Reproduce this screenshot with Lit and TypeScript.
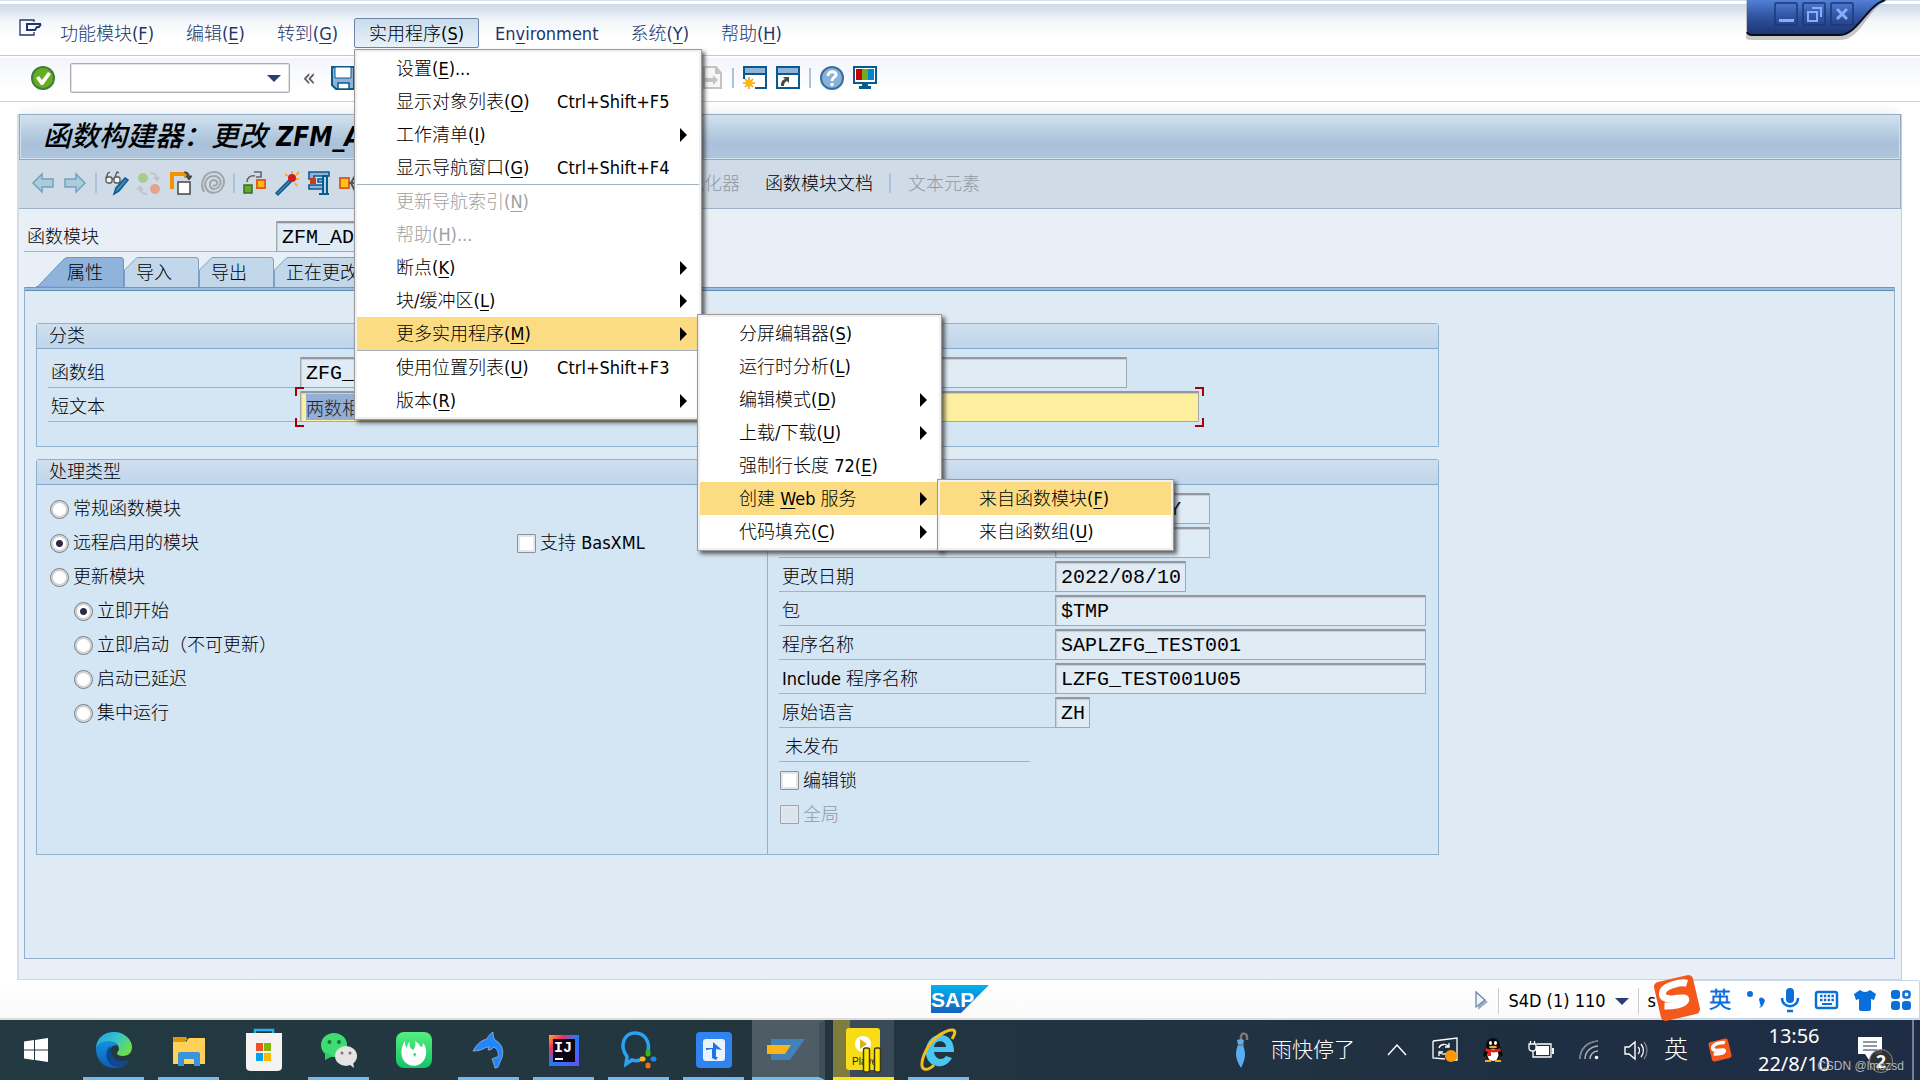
import { LitElement, html, svg, css, nothing, TemplateResult } from "lit";
import { customElement, property } from "lit/decorators.js";

/** Icon drawings, keyed by name: [width, height, shapes]. */
const icons: Record<string, [number, number, unknown]> = {
  session: [24, 18, svg`<g fill="none" stroke="#22366b"><path d="M15 3V1H1v15h14v-3" stroke-width="1.3"/><path d="M22 5H8v6h8l2-3h2l2-3M8 5v6" stroke-width="2"/></g>`],
  ok: [24, 24, svg`<circle cx="12" cy="12" r="11" fill="#68ac20" stroke="#3d7d3f" stroke-width="2"/><path d="M5 12l3-2 3 4 6-8 3 2-8 11h-2z" fill="#fff"/>`],
  save: [24, 24, svg`<path d="M1 1h22v22H5l-4-4z" fill="#8fb4d8" stroke="#0b5a8e" stroke-width="2"/><path d="M4 1h16v11H4z" fill="#fff" stroke="#0b5a8e"/><path d="M7 17h11v6H7z" fill="#fff" stroke="#0b5a8e" stroke-width="1.5"/>`],
  page: [24, 24, svg`<path d="M5 1h12l5 6v15H5z" fill="#f6f6f6" stroke="#c3c3c3" stroke-width="2"/><path d="M16 1v7h6M6 12h8v-3l5 5-5 5v-3H6z" fill="#c3c3c3"/>`],
  newwin: [24, 24, svg`<path d="M1 1h22v21H1z" fill="#fff"/><path d="M1 1h22v7H1z" fill="#8fb4d8"/><path d="M1 13V1h22v21H12M1 8h22" fill="none" stroke="#0b5a8e" stroke-width="2"/><path d="M6 11v12M0 17h12M2 13l8 8M10 13l-8 8" stroke="#f39c12" stroke-width="1.6"/><circle cx="6" cy="17" r="3.5" fill="#fdb913"/>`],
  shortcut: [24, 24, svg`<path d="M1 1h22v21H1z" fill="#fff"/><path d="M1 1h22v7H1z" fill="#8fb4d8"/><path d="M1 1h22v21H1zM1 8h22" fill="none" stroke="#0b5a8e" stroke-width="2"/><path d="M5 20c0-4 1-6 4-7l-2-2h6v6l-2-2c-2 1-3 2-3 5z" fill="#4a4a4a"/>`],
  help: [24, 24, svg`<circle cx="12" cy="12" r="11" fill="#8ab0d6" stroke="#3470a3" stroke-width="2"/><path d="M8 10c0-6 9-5 8-1-1 3-4 2-4 6" fill="none" stroke="#fff" stroke-width="3"/><path d="M10.500 17h3v3h-3z" fill="#fff"/>`],
  monitor: [24, 24, svg`<path d="M1 1h22v16H1z" fill="#fff" stroke="#0b5a8e" stroke-width="2"/><path d="M3 3h6v11H3z" fill="#c80000"/><path d="M9 3h6v11H9z" fill="#70ad1c"/><path d="M15 3h6v11h-6z" fill="#0088cf"/><path d="M9 18h6v2h3v3H6v-3h3z" fill="#0b5a8e"/>`],
  back: [24, 24, svg`<path d="M2 12l9-9v5h11v8H11v5z" fill="#aecbdc" stroke="#6ea2c1" stroke-width="1.5"/>`],
  forward: [24, 24, svg`<path d="M22 12l-9-9v5H2v8h11v5z" fill="#aecbdc" stroke="#6ea2c1" stroke-width="1.5"/>`],
  toggle: [24, 24, svg`<path d="M9 23l2-6 9-10 3 2-9 11z" fill="#3f85b8" stroke="#0b5a8e" stroke-width="1.5"/><g fill="#eef3f7" stroke="#555" stroke-width="1.300"><rect x="1" y="6" width="6" height="6" rx="2"/><rect x="9" y="6" width="6" height="6" rx="2"/><path d="M1 7l2-5 2-1M10 6l2-5 2 1M7 8h2" fill="none"/></g>`],
  activate: [24, 24, svg`<circle cx="6" cy="7" r="5" fill="#a9cb90"/><circle cx="18" cy="18" r="5" fill="#e3a38c"/><path d="M13 2c5 0 7 2 7 6m-3-2l3 3 2-3M10 23c-5 0-7-2-7-6m-3 2l3-3 3 3" fill="none" stroke="#bfc4c8" stroke-width="2"/>`],
  copy: [24, 24, svg`<path d="M3 18V3h14v4" fill="none" stroke="#f39200" stroke-width="4"/><path d="M9 11h12v12H9z" fill="#fff" stroke="#444" stroke-width="1.5"/><path d="M15 1c4 0 5 1 5 5m-3-1l3 4 3-4z" fill="#444" stroke="#444"/>`],
  spiral: [24, 24, svg`<g fill="none" stroke="#a0a5a9" stroke-width="2"><path d="M3 21C-2 11 4 1 13 1c8 0 12 8 9 14-3 8-14 9-17 2-3-6 2-12 8-12 5 0 8 5 6 9-2 5-9 5-10 1-1-4 2-6 4-6s4 2 3 4c-1 2-3 2-4 1"/></g>`],
  whereused: [24, 24, svg`<path d="M1 14h8v8H1z" fill="#6aa82a" stroke="#35702a" stroke-width="1.500"/><path d="M14 9h8v8h-8z" fill="#fdb913" stroke="#e2601c" stroke-width="2"/><path d="M4 11c0-4 3-7 8-6M11 1h7v5h-5" fill="none" stroke="#666" stroke-width="1.600"/>`],
  wand: [24, 24, svg`<path d="M1 22L14 9l2 2L3 24z" fill="#3f85b8" stroke="#0b5a8e" stroke-width="1.5"/><path d="M17 0v4M10 3l3 2M24 1l-3 3M24 8h-4M20 12l2 3" stroke="#f8ad1a" stroke-width="2"/><circle cx="17" cy="7" r="4" fill="#d71919"/>`],
  clamp: [24, 24, svg`<path d="M2 1h20v4H7v3H2zM11 8h5v3h-5zM2 14h14v4H2z" fill="#8fb4d8" stroke="#0b5a8e" stroke-width="1.600"/><path d="M16 5h4v18h-4zM12 23h10" fill="#b5cfe6" stroke="#0b5a8e" stroke-width="2"/><path d="M3 7h6v6H3z" fill="#cc3a1c"/>`],
  hierarchy: [24, 24, svg`<path d="M1 7h9v10H1z" fill="#fdc413" stroke="#e2601c" stroke-width="2"/><path d="M10 12h12M12 12l5-9h5M12 12l5 10h5" fill="none" stroke="#555" stroke-width="2"/>`],
  start: [24, 24, svg`<path d="M0 3.500L10 2v9.500H0zM11 2l13-2v11.500H11zM0 12.500h10V22L0 20.500zM11 12.500h13V24l-13-2z" fill="#fff"/>`],
  edge: [36, 36, svg`<defs><linearGradient id="e1" x1="0" y1="0" x2="1" y2=".6"><stop offset="0" stop-color="#1b9de2"/><stop offset=".5" stop-color="#35c1d0"/><stop offset="1" stop-color="#6be04a"/></linearGradient><linearGradient id="e2" x1="0" y1="0" x2="0" y2="1"><stop offset="0" stop-color="#1690dd"/><stop offset="1" stop-color="#0b5db8"/></linearGradient></defs><path d="M0 17C0 6 8 0 18 0c11 0 18 8 18 15 0 6-4 9-9 9-4 0-6-1-6-3 0-1 2-2 2-4 0-4-4-7-9-7-7 0-12 3-14 7z" fill="url(#e1)"/><path d="M0 17c1-5 6-8 12-8 5 0 9 2 10 4-7 0-10 5-9 10 1 8 8 11 15 11-2 1-6 2-10 2C7 36 0 27 0 17z" fill="url(#e2)"/><path d="M14 14c-7 7-4 21 9 21 5 0 9-4 11-8-9 5-20 2-20-13z" fill="#10488f"/>`],
  explorer: [32, 28, svg`<path d="M0 1h13l2 3h-2v4H0z" fill="#d99a07"/><path d="M0 6h13l3-4h16v26H0z" fill="#ffd158"/><path d="M5 28V18q0-2 2-2h18q2 0 2 2v12h-6v-7H11v7H5z" fill="#3b93d9"/>`],
  store: [36, 44, svg`<path d="M9 9V2h18v7" fill="none" stroke="#29b1ef" stroke-width="2.500"/><path d="M0 5h36v34q0 4-5 4H5q-5 0-5-4z" fill="#f4f3f2"/><path d="M10 15h7v8h-7z" fill="#f25022"/><path d="M18 15h7v8h-7z" fill="#7fba00"/><path d="M10 25h7v8h-7z" fill="#00a4ef"/><path d="M18 25h7v8h-7z" fill="#ffb900"/>`],
  wechat: [36, 36, svg`<ellipse cx="13" cy="13" rx="13" ry="12" fill="#3fdc72"/><path d="M4 20v8l8-4z" fill="#2ccf66"/><circle cx="8.500" cy="10" r="2" fill="#157a37"/><circle cx="18" cy="10" r="2" fill="#157a37"/><ellipse cx="25" cy="24" rx="11" ry="10" fill="#e4e4e4"/><path d="M28 32l5 4-1-6z" fill="#e4e4e4"/><circle cx="21" cy="21" r="1.500" fill="#777"/><circle cx="29" cy="21" r="1.500" fill="#777"/>`],
  greencat: [36, 36, svg`<defs><linearGradient id="gc" x1="0" y1="0" x2="0" y2="1"><stop offset="0" stop-color="#55ee80"/><stop offset="1" stop-color="#12c566"/></linearGradient></defs><rect width="36" height="36" rx="8" fill="url(#gc)"/><path d="M9 9c-4 6-5 14-1 20 5 7 16 6 20-1 4-6 2-14-1-17 0 3-1 4-2 4-2-3-4-5-6-6 1 4 0 7-2 9-3-2-4-4-3-8-2 1-3 3-3 6-2-2-2-4-2-7z" fill="#fff"/><path d="M17 22l3-1-1 4z" fill="#12c566"/>`],
  dolphin: [32, 36, svg`<path d="M0 19c5-9 10-11 14-12 1-3 3-5 6-7 0 3 0 5 2 8 9 5 10 14 4 24 0 3-2 4-4 4-1-4-2-6-3-9 2-1 4-2 6-2 1-5-1-8-4-10-2 2-3 3-6 3 0-1 1-2 1-3-5 0-6 4-16 4z" fill="#2386ff" stroke="#9fb7c8" stroke-width=".8"/>`],
  idea: [30, 31, svg`<defs><linearGradient id="ij" x1="0" y1="0" x2="1" y2="1"><stop offset="0" stop-color="#ffb01c"/><stop offset=".25" stop-color="#f82a66"/><stop offset=".5" stop-color="#1a7ff5"/><stop offset="1" stop-color="#6d4df5"/></linearGradient></defs><path d="M0 0h30v31H0z" fill="url(#ij)"/><path d="M4 4h22v23H4z" fill="#0d0512"/><path d="M6 23h8v2H6z" fill="#fff"/><text x="5" y="17" font-size="15" font-weight="700" fill="#fff" font-family="Liberation Mono, monospace">IJ</text>`],
  wecom: [36, 38, svg`<path d="M27 20c2-9-3-18-13-18S0 12 3 20c1 3 3 5 3 6l-1 7 6-4c3 1 5 1 8 0" fill="none" stroke="#2ba1f2" stroke-width="3.500"/><g stroke-width="5" stroke-linecap="round"><path d="M27 21v2" stroke="#36b41c"/><path d="M33 28h-1" stroke="#1987ef"/><path d="M27 35v-1" stroke="#fb6c15"/><path d="M21 28h1" stroke="#fcb31b"/></g>`],
  todesk: [36, 36, svg`<rect width="36" height="36" rx="4" fill="#3184f0"/><rect x="7" y="7" width="22" height="22" rx="3" fill="#e9f2ff"/><path d="M17 10l9 8-6-1v8h2l-2 3-4-2v-9l-6 1v-2h7z" fill="#1f73e6"/>`],
  saplogon: [38, 22, svg`<path d="M4 0h34L23 21H4z" fill="#4381b6"/><path d="M0 6h24l-6 9H0z" fill="#fdb515"/>`],
  player: [36, 44, svg`<rect width="34" height="42" rx="3" fill="#f8dc18"/><circle cx="17" cy="16" r="8" fill="#fff"/><path d="M14 11l7 5-7 5z" fill="#d9b80b"/><text x="6" y="37" font-size="10" fill="#222" font-family="Liberation Sans, sans-serif">Player</text><rect x="17.500" y="20" width="6" height="24" rx="2" fill="#ffe600" stroke="#3c3a1a" stroke-width="1.500"/><rect x="28.500" y="20" width="6" height="24" rx="2" fill="#ffe600" stroke="#3c3a1a" stroke-width="1.500"/>`],
  ie: [36, 42, svg`<path d="M31 29C27 36 21 38 16 37 7 35 4 28 5 20 6 12 12 6 19 6c9 0 14 6 14 17H13c1 8 9 9 12 4zM13 18h12c0-7-11-8-12 0z" fill="#48c7f5"/><path d="M31 10c3-5 4-8 1-9-6-1-19 7-25 17C1 28-1 38 3 40c3 1 7-1 10-4" fill="none" stroke="#f4bd18" stroke-width="3"/>`],
  umbrella: [14, 36, svg`<path d="M6 8V5c0-5 6-4 6 0v3" fill="none" stroke="#7e7675" stroke-width="2.500"/><path d="M2 8l4-1 3 1-1 5c3 8 3 13-2 23C0 26 0 20 3 13z" fill="#59aef1"/><path d="M3 13h6" stroke="#8d6f63" stroke-width="1.500"/>`],
  caret: [20, 14, svg`<path d="M1 12l9-10 9 10" fill="none" stroke="#fff" stroke-width="1.500"/>`],
  update: [26, 26, svg`<path d="M1 4l24-3v22l-6 0M13 22L1 21V4" fill="none" stroke="#fff" stroke-width="1.300"/><path d="M7 11c1-4 7-5 10-1M17 6v4h-4M17 14c-2 4-8 4-10 1M7 19v-4h4" fill="none" stroke="#fff" stroke-width="1.300"/><circle cx="19" cy="19" r="6" fill="#ff9800"/>`],
  qq: [20, 24, svg`<ellipse cx="10" cy="8" rx="7" ry="8" fill="#0b0b0b"/><path d="M3 9C0 14 0 18 1 19l2-2M17 9c3 5 3 9 2 10l-2-2" fill="#0b0b0b"/><ellipse cx="10" cy="16" rx="7.500" ry="7" fill="#0b0b0b"/><ellipse cx="10" cy="17" rx="5.500" ry="6" fill="#fff"/><ellipse cx="7.500" cy="5" rx="1.500" ry="2" fill="#fff"/><ellipse cx="12.500" cy="5" rx="1.500" ry="2" fill="#fff"/><ellipse cx="10" cy="9" rx="4" ry="1.300" fill="#f5a623"/><path d="M3 10c4 2 10 2 14 0l1 3c-3 1-7 2-10 1v4H5v-4l-3-1z" fill="#e3231b"/><path d="M2 22h6v2H2zM12 22h6v2h-6z" fill="#f5a623"/>`],
  battery: [26, 18, svg`<path d="M9 3h14v13H5v-6" fill="none" stroke="#fff" stroke-width="1.300"/><path d="M8 5h13v9H8z" fill="#fff"/><path d="M24 7h2v6h-2z" fill="#fff"/><path d="M1 3h7v4q0 3-3.500 3T1 7z" fill="#1f2e40" stroke="#fff" stroke-width="1.300"/><path d="M2.500 0v3M6.500 0v3" stroke="#fff" stroke-width="1.300"/>`],
  wifi: [20, 20, svg`<g fill="none" stroke="#aab4be" stroke-width="1.500"><path d="M1 19C1 9 8 2 19 1M6 19c0-7 5-12 13-13M11 19c0-4 3-8 8-8" /></g><path d="M1 19C1 9 8 2 19 1" fill="none" stroke="#66727f"/><circle cx="17.500" cy="17.500" r="1.800" fill="#fff"/>`],
  speaker: [24, 20, svg`<path d="M1 7h4l6-5v17l-6-5H1z" fill="none" stroke="#fff" stroke-width="1.400"/><path d="M14 7c2 2 2 5 0 7M17 4c3 4 3 9 0 13" fill="none" stroke="#fff" stroke-width="1.300"/><path d="M20 2c4 5 4 12 0 17" fill="none" stroke="#76828e" stroke-width="1.300"/>`],
  sogou: [48, 48, svg`<g transform="rotate(-13 24 24)"><rect x="4" y="4" width="40" height="40" rx="5" fill="#f4581c"/><path d="M37 12c-5-3-21-3-25 2-4 6 1 9 9 10 7 1 12 1 11 4-2 4-14 3-22 1" fill="none" stroke="#fff" stroke-width="7"/></g>`],
  notify: [26, 26, svg`<path d="M0 0h24v17h-9l-4 6-4-6H0z" fill="#fff"/><path d="M5 5h14M5 9h14M5 13h14" stroke="#23314a"/>`],
  play: [14, 20, svg`<path d="M3 3v16l10-8z" fill="#9fb0c4"/><path d="M1 1v15l9-7z" fill="#eef4fb" stroke="#6d87a5" stroke-width="1.300"/>`],
  punct: [20, 20, svg`<circle cx="4" cy="4" r="3" fill="#0a6fdb"/><path d="M13 9a3 3 0 1 1 5 4q-1 4-5 5c2-2 2-3 1-4z" fill="#0a6fdb"/>`],
  mic: [18, 24, svg`<rect x="5" y="0" width="8" height="15" rx="4" fill="#0a6fdb"/><path d="M1 10c0 11 16 11 16 0M6 23h6" fill="none" stroke="#0a6fdb" stroke-width="2.500"/>`],
  keyboard: [24, 18, svg`<rect x="1" y="1" width="21" height="16" rx="2" fill="none" stroke="#0a6fdb" stroke-width="2.500"/><path d="M5 5h14M5 9h14" stroke="#0a6fdb" stroke-width="2.500" stroke-dasharray="2.500 1.300"/><path d="M7 13h10" stroke="#0a6fdb" stroke-width="2"/>`],
  shirt: [22, 22, svg`<path d="M6 1q5 4 10 0l6 4-2 6-3-1v10q0 2-2 2H7q-2 0-2-2V10l-3 1-2-6z" fill="#0a6fdb"/>`],
  grid: [20, 20, svg`<g fill="#0a6fdb"><rect width="9" height="9" rx="3"/><rect y="11" width="9" height="9" rx="3"/><rect x="11" y="11" width="9" height="9" rx="3"/></g><rect x="12.500" y="1.500" width="6" height="6" rx="2" fill="none" stroke="#0a6fdb" stroke-width="2.500"/>`],
  sap: [58, 28, svg`<defs><linearGradient id="sp" x1="0" y1="0" x2="0" y2="1"><stop offset="0" stop-color="#00b4ee"/><stop offset="1" stop-color="#1661bd"/></linearGradient></defs><path d="M0 0h58L30 28H0z" fill="url(#sp)"/><text x="0" y="22" font-size="21" font-weight="700" fill="#fff" font-family="Liberation Sans, sans-serif">SAP</text>`],
};

const icon = (name: string) => {
  const [w, h, shapes] = icons[name];
  return html`<svg class="icon" width=${w} height=${h} viewBox="0 0 ${w} ${h}" aria-hidden="true">${shapes}</svg>`;
};

/** Renders a caption; the character after "&" is the underlined access key. */
const caption = (text: string) => {
  const at = text.indexOf("&");
  return at < 0 ? html`${text}` : html`${text.slice(0, at)}<u>${text[at + 1]}</u>${text.slice(at + 2)}`;
};

interface Item {
  text: string;
  keys?: string;
  disabled?: boolean;
  rule?: boolean;
  more?: boolean;
  open?: boolean;
  size?: string;
  items?: Item[];
}

const utilities: Item[] = [
  { text: "设置(&E)..." },
  { text: "显示对象列表(&O)", keys: "Ctrl+Shift+F5" },
  { text: "工作清单(&I)", more: true },
  { text: "显示导航窗口(&G)", keys: "Ctrl+Shift+F4", rule: true },
  { text: "更新导航索引(&N)", disabled: true },
  { text: "帮助(&H)...", disabled: true },
  { text: "断点(&K)", more: true },
  { text: "块/缓冲区(&L)", more: true },
  {
    text: "更多实用程序(&M)", more: true, open: true, rule: true, size: "second",
    items: [
      { text: "分屏编辑器(&S)" },
      { text: "运行时分析(&L)" },
      { text: "编辑模式(&D)", more: true },
      { text: "上载/下载(&U)", more: true },
      { text: "强制行长度 72(&E)" },
      {
        text: "创建 &Web 服务", more: true, open: true, size: "third",
        items: [{ text: "来自函数模块(&F)", open: true }, { text: "来自函数组(&U)" }],
      },
      { text: "代码填充(&C)", more: true },
    ],
  },
  { text: "使用位置列表(&U)", keys: "Ctrl+Shift+F3" },
  { text: "版本(&R)", more: true },
];

const base = css`
  * { box-sizing: border-box; }
  button, input, select { font: inherit; color: inherit; margin: 0; }
  button { border: 0; background: none; padding: 0; }
  ul { list-style: none; margin: 0; padding: 0; }
  .icon { display: block; flex: none; overflow: visible; }
  u { text-underline-offset: 3px; text-decoration-thickness: 1px; }
`;

@customElement("drop-menu")
export class DropMenu extends LitElement {
  @property({ attribute: false }) items: Item[] = [];
  static styles = [base, css`
    :host { display: block; color: #000; }
    .menu { background: #fff; border: 1px solid #9a9a9a; padding: 2px; box-shadow: inset 0 0 0 2px #f0f0f0, 3px 3px 4px rgba(40, 40, 40, 0.7); }
    .first { width: 348px; }
    .second { width: 245px; }
    .third { width: 237px; }
    .entry { position: relative; }
    .rule { border-bottom: 1px solid #a3b0be; }
    .item { display: flex; align-items: center; width: 100%; height: 33px; padding: 2px 12px 0 39px; text-align: left; white-space: nowrap; }
    .item.open { background: #fcdc82; }
    .item:disabled { color: #a0a0a0; }
    .text { width: 161px; }
    .arrow { margin-left: auto; border: 7px solid transparent; border-left-color: #000; border-right: 0; }
    .sub { position: absolute; top: -3px; left: calc(100% - 2px); z-index: 2; }
  `];
  private list(items: Item[], size: string): TemplateResult {
    return html`<ul class="menu ${size}" role="menu">
      ${items.map((i) => html`<li class="entry ${i.rule ? "rule" : ""}" role="none">
        <button class="item ${i.open ? "open" : ""}" role="menuitem" ?disabled=${i.disabled}>
          <span class="text">${caption(i.text)}</span>
          ${i.keys ? html`<span>${i.keys}</span>` : nothing}
          ${i.more ? html`<span class="arrow"></span>` : nothing}
        </button>
        ${i.items ? html`<div class="sub">${this.list(i.items, i.size ?? "")}</div>` : nothing}
      </li>`)}
    </ul>`;
  }
  render() {
    return this.list(this.items, "first");
  }
}

@customElement("task-bar")
export class TaskBar extends LitElement {
  static styles = [base, css`
    :host { display: block; }
    .bar { display: flex; height: 60px; color: #fff; background: linear-gradient(90deg, #233a42 0%, #22353f 45%, #1e2c45 100%); }
    .app { width: 75px; height: 60px; display: flex; align-items: center; justify-content: center; padding: 0 7px; }
    .app:first-child { width: 76px; padding: 0 10px 0 6px; }
    .face { width: 61px; height: 60px; display: flex; align-items: center; justify-content: center; border-bottom: 3px solid transparent; border-top: 3px solid transparent; }
    .running { border-bottom-color: #76b9ed; }
    .current { width: 73px; flex: none; background: #4d5c65; background-clip: border-box; border-top-color: #4d5c65; border-right: 6px solid #3f4e58; }
    .yellow { background: linear-gradient(90deg, #7d7c3e 0 17px, #3a4a56 17px) border-box; border-bottom-color: #ffe800; }
    .tray { display: flex; align-items: center; margin-left: auto; }
    .weather { display: flex; align-items: center; gap: 22px; font-size: 21px; margin-right: 32px; }
    .signs { display: flex; align-items: center; gap: 25px; margin-right: 16px; }
    .lang { font-size: 24px; line-height: 30px; margin-right: 20px; }
    .mini { width: 24px; height: 24px; }
    .mini .icon { width: 24px; height: 24px; }
    .clock { display: flex; flex-direction: column; align-items: center; width: 76px; margin: 0 26px 0 24px; font: 20px/28px "Noto Sans", sans-serif; }
    .note { position: relative; width: 26px; height: 26px; margin-right: 28px; }
    .count { position: absolute; left: 11px; top: 12px; width: 24px; height: 24px; border-radius: 12px; background: rgba(50, 50, 50, 0.9); border: 1px solid #8b8b8b; font: 700 18px/22px "Noto Sans", sans-serif; text-align: center; }
    .peek { width: 2px; height: 60px; background: #77808f; margin-right: 6px; }
  `];
  render() {
    const apps: [string, string, string][] = [
      ["start", "", "开始"], ["edge", "running", "Edge"], ["explorer", "running", "文件"], ["store", "", "Store"],
      ["wechat", "running", "微信"], ["greencat", "", "浏览器"], ["dolphin", "running", "Dolphin"], ["idea", "running", "IntelliJ"],
      ["wecom", "running", "企业微信"], ["todesk", "running", "ToDesk"], ["saplogon", "running current", "SAP Logon"],
      ["player", "running yellow", "Player"], ["ie", "running", "Internet Explorer"],
    ];
    return html`<footer class="bar">
      ${apps.map(([n, c, t]) => html`<button class="app" aria-label=${t}><span class="face ${c}">${icon(n)}</span></button>`)}
      <div class="tray">
        <div class="weather">${icon("umbrella")}<span>雨快停了</span></div>
        <div class="signs">
          ${["caret", "update", "qq", "battery", "wifi", "speaker"].map((n) => icon(n))}
        </div>
        <span class="lang">英</span>
        <span class="mini"><svg class="icon" viewBox="0 0 48 48" aria-hidden="true">${icons.sogou[2]}</svg></span>
        <div class="clock"><span>13:56</span><span>22/8/10</span></div>
        <div class="note">${icon("notify")}<span class="count">2</span></div>
        <span class="peek"></span>
      </div>
    </footer>`;
  }
}

@customElement("app-root")
export class AppRoot extends LitElement {
  static styles = [base, css`
    :host { display: block; font: 18px/24px "DejaVu Sans Condensed", "Noto Sans CJK SC Light", "Noto Sans CJK SC", sans-serif; color: #000; }
    .window { min-height: 100vh; display: flex; flex-direction: column; position: relative; background: #fff; overflow: hidden; }
    .menubar { display: flex; align-items: center; height: 56px; padding: 9px 0 0 19px; border-bottom: 1px solid #c5c9ce; border-top: 1px solid #d5e1ee; background: linear-gradient(#fff 0 3px, #ccd9e8 3px, #f3f6fa 20px, #fff 36px); color: #22366b; }
    .session { width: 25px; height: 28px; padding-bottom: 10px; }
    .head { position: relative; }
    .head > button { display: block; height: 30px; padding: 2px 16px 0; white-space: nowrap; border-radius: 2px; }
    .head > button.on { width: 125px; padding: 2px 14px 0; border: 1px solid #6c84ab; background: linear-gradient(#c9dcec, #e8f2fa); color: #000; }
    .drop { position: absolute; left: 0; top: 31px; z-index: 5; }
    .caps { position: absolute; right: 30px; top: 0; }
    .tools { display: flex; align-items: center; gap: 9px; height: 46px; padding: 0 31px 2px; border-bottom: 1px solid #ccd0d6; background: linear-gradient(#fff 0 2px, #f3f5fa 2px, #fff 34px); }
    .command { width: 220px; height: 30px; margin-left: 6px; display: flex; border: 1px solid #a9abae; border-radius: 2px; background: #fff; box-shadow: inset 0 0 0 1px #e1e3e5; }
    .command input { flex: 1; min-width: 0; border: 0; background: none; padding: 0 6px; outline: 0; }
    .command button { width: 30px; }
    .tri { display: inline-block; border: 7px solid transparent; border-top-color: #2b3d74; border-bottom: 0; vertical-align: middle; }
    .collapse { width: 18px; height: 28px; font-size: 24px; line-height: 22px; color: #555; margin: 0 4px 0 1px; }
    .sep { width: 2px; height: 20px; background: #a9c3dd; flex: none; }
    .later { margin-left: 335px; }
    .main { flex: 1; display: flex; flex-direction: column; margin: 12px 18px 0 17px; border-left: 2px solid #d6dce8; border-right: 1px solid #c5cfdf; border-bottom: 1px solid #cfd6e0; background: #e8eff7; box-shadow: 0 -8px 8px -4px #edf1f6; }
    h1 { margin: 0; height: 46px; padding-left: 23px; border: 1px solid #8fa9c3; box-shadow: inset 0 0 0 1px #d5e3ef; background: linear-gradient(#d3e1ee, #adc6dc 55%, #abc1da 65%, #abc5dc); font: italic 500 28px/38px "Noto Sans CJK SC", sans-serif; white-space: nowrap; }
    h1 b { margin-left: 3px; font: italic 700 26px/38px "DejaVu Sans Condensed", sans-serif; }
    .apps { display: flex; align-items: center; gap: 8px; height: 49px; padding: 0 12px 3px; border-bottom: 1px solid #9fb2c8; border-right: 1px solid #9fb2c8; background: #cfdce7; }
    .apps .word { padding-top: 2px; white-space: nowrap; }
    .apps .fmt { margin-left: 297px; }
    .apps .doc { margin: 0 8px 0 17px; }
    .apps .elem { margin-left: 9px; }
    .off { color: #8f9aa5; }
    .content { flex: 1; display: flex; flex-direction: column; padding: 12px 6px 20px 5px; }
    .row { display: flex; height: 31px; }
    .lab { width: 252px; padding-left: 3px; line-height: 32px; border-bottom: 1px solid #adb1b5; white-space: nowrap; }
    .field { height: 31px; padding: 0 5px; border: 1px solid #a3a8ad; border-top: 2px solid #94989d; border-radius: 1px; background: #dfebf5; box-shadow: inset 1px 1px 1px #c5cdd4; font: 20px/26px "Liberation Mono", "Noto Sans CJK SC Light", "Noto Sans CJK SC", monospace; outline: 0; min-width: 0; }
    .w-id { width: 372px; }
    .w-grp { width: 330px; }
    .w-desc { width: 497px; }
    .w-short { width: 100%; background: #feef9e; font-size: 18px; }
    .w-user { width: 155px; }
    .w-date { width: 131px; }
    .w-full { width: 371px; }
    .w-lang { width: 35px; }
    .w-short::selection { background: #93afd5; color: #222; }
    .tabs { display: flex; height: 30px; margin-top: 5px; padding-left: 12px; }
    .tab { position: relative; width: 75px; height: 30px; padding: 1px 0 0 12px; text-align: left; white-space: nowrap; }
    .tab.sel { width: 88px; padding-left: 31px; }
    .tab.wide { width: 110px; }
    .tab svg { position: absolute; inset: 0; }
    .tab span { position: relative; }
    .sheet { flex: 1; display: grid; grid-template-columns: 1403fr 455fr; align-content: start; row-gap: 12px; border: 1px solid #8fb1d0; border-top: 0; background: #dfebf4; padding: 36px 0 20px 11px; box-shadow: inset 0 1px #6c97c4, inset 0 3px #9dbddd, inset 0 4px #5f8bb8; }
    .group, .pair { grid-column: 1; }
    .group, .half { border: 1px solid #8fb1d0; border-radius: 3px 3px 0 0; background: #d4e5f3; }
    h2 { margin: 0; height: 25px; padding-left: 12px; border-bottom: 1px solid #86a8cb; background: linear-gradient(#cfdfee, #bfd5ea); font-size: 18px; font-weight: 400; line-height: 24px; }
    .classify { padding: 8px 11px 24px; display: flex; flex-direction: column; gap: 3px; }
    .short { position: relative; width: 899px; }
    .c { position: absolute; width: 9px; height: 9px; border: 0 solid #a80000; }
    .tl { left: -5px; top: -4px; border-width: 2px 0 0 2px; }
    .bl { left: -5px; bottom: -5px; border-width: 0 0 2px 2px; }
    .tr { right: -5px; top: -4px; border-width: 2px 2px 0 0; }
    .br { right: -5px; bottom: -5px; border-width: 0 2px 2px 0; }
    .pair { display: grid; grid-template-columns: 734fr 669fr; }
    .half { height: 396px; }
    .half + .half { border-left: 0; }
    .type { display: flex; padding: 7px 13px 0; }
    .choices { width: 467px; }
    .choices, .check { display: flex; flex-direction: column; }
    .opt { display: flex; align-items: center; gap: 4px; height: 34px; white-space: nowrap; }
    .inner { padding-left: 24px; }
    .opt input { appearance: none; width: 19px; height: 19px; border: 1px solid #8d9196; background: #fff; box-shadow: inset 0 0 0 2px #e3e6ea; border-radius: 1px; }
    .opt input[type="radio"] { border-radius: 50%; border: 1px solid #777c82; box-shadow: inset 0 0 0 2px #d0d2d5; }
    .opt input[type="radio"]:checked { background: radial-gradient(circle, #2c2c44 0 3px, #fff 4px); }
    .opt input:disabled { background: #d9e4ee; border-color: #9da3aa; }
    .check { padding-top: 34px; }
    .general { display: flex; flex-direction: column; gap: 3px; padding: 8px 12px 0 11px; }
    .general .lab { width: 276px; }
    .general .free { width: 251px; padding-left: 6px; }
    .general .opt { height: 31px; padding-left: 1px; }
    .status { position: relative; display: grid; grid-template-columns: 1fr auto 1fr; align-items: center; height: 40px; border-bottom: 2px solid #dcdcdc; background: linear-gradient(#fff, #fafafa); }
    .sys { display: flex; align-items: center; justify-content: flex-end; gap: 9px; padding: 4px 264px 0 0; white-space: nowrap; }
    .bar { width: 1px; height: 26px; background: #ccc; }
    .ime { position: absolute; right: 0; bottom: -1px; z-index: 3; width: 251px; height: 39px; display: flex; align-items: center; justify-content: space-between; padding: 0 8px 0 39px; border: 1px solid #c3d6e6; border-radius: 2px; background: #fff; color: #0a6fdb; }
    .ime b { font-size: 22px; line-height: 30px; }
    .ime .logo { position: absolute; left: -17px; top: -7px; }
    .mark { position: absolute; right: 16px; bottom: 4px; z-index: 4; font: 12px/20px "Liberation Sans", sans-serif; color: #b4b8bf; }
  `];

  firstUpdated() {
    this.renderRoot.querySelector<HTMLInputElement>("#short")?.select();
  }

  private field(id: string, cls: string, value: string) {
    return html`<input id=${id} class="field ${cls}" aria-label=${id} .value=${value} readonly />`;
  }

  private line(id: string, label: string, cls: string, value: string) {
    return html`<div class="row"><label class="lab" for=${id}>${label}</label>
      <input id=${id} class="field ${cls}" .value=${value} readonly /></div>`;
  }

  private radio(group: string, label: string, checked = false, inner = false) {
    return html`<label class="opt ${inner ? "inner" : ""}"><input type="radio" name=${group} .checked=${checked} />${label}</label>`;
  }

  private tool(name: string, label: string, extra = "") {
    return html`<button class="tool ${extra}" aria-label=${label}>${icon(name)}</button>`;
  }

  render() {
    const head = (t: string) => html`<div class="head"><button>${caption(t)}</button></div>`;
    const tabShape = svg`<path d="M.5 31V13L13 .5H72q2.500 0 2.500 2.500V31z" fill="#c3d7ea" stroke="#7da0c4"/>`;
    return html`
      <div class="window">
        <nav class="menubar">
          <button class="session" aria-label="会话">${icon("session")}</button>
          ${head("功能模块(&F)")}${head("编辑(&E)")}${head("转到(&G)")}
          <div class="head">
            <button class="on" aria-expanded="true">${caption("实用程序(&S)")}</button>
            <drop-menu class="drop" .items=${utilities}></drop-menu>
          </div>
          ${head("En&vironment")}${head("系统(&Y)")}${head("帮助(&H)")}
        </nav>
        <svg class="caps" width="150" height="44" viewBox="0 0 150 44" role="img" aria-label="窗口控制">
          <defs><linearGradient id="cap" x1="0" y1="0" x2="0" y2="1"><stop offset="0" stop-color="#5180d6"/><stop offset=".5" stop-color="#2f519f"/><stop offset="1" stop-color="#1d3470"/></linearGradient></defs>
          <path d="M6 0v38q1 2 5 2h90c20 0 28-34 47-40z" fill="#777" opacity=".4"/>
          <path d="M7 0h138c-19 6-27 35-46 35H13q-6 0-6-5z" fill="url(#cap)"/>
          <path d="M7 32q1 3 5 3h87c19 0 27-29 46-35" fill="none" stroke="#08101f" stroke-width="2"/>
          <g fill="none" stroke="#1d3978" stroke-width="1.500"><rect x="35" y="3" width="22" height="22" rx="1"/><rect x="63" y="3" width="22" height="22" rx="1"/><rect x="91" y="3" width="22" height="22" rx="1"/></g>
          <g fill="none" stroke="#86acff"><path d="M39 20.500h15" stroke-width="3"/><path d="M68 12h9v9h-9zM72 8h9v9" stroke-width="2"/><path d="M97 9l10 10M107 9L97 19" stroke-width="3"/></g>
        </svg>
        <div class="tools">
          ${this.tool("ok", "回车")}
          <div class="command"><input aria-label="命令" /><button aria-label="历史"><span class="tri"></span></button></div>
          <button class="collapse" aria-label="收起">«</button>
          ${this.tool("save", "保存")}
          ${this.tool("page", "翻页", "later")}
          <span class="sep"></span>
          ${this.tool("newwin", "新会话")}${this.tool("shortcut", "快捷方式")}
          <span class="sep"></span>
          ${this.tool("help", "帮助")}${this.tool("monitor", "布局")}
        </div>
        <main class="main">
          <h1>函数构建器：更改 <b>ZFM_ADD</b></h1>
          <div class="apps">
            ${this.tool("back", "后退")}${this.tool("forward", "前进")}
            <span class="sep"></span>
            ${this.tool("toggle", "显示/更改")}${this.tool("activate", "激活")}${this.tool("copy", "其他对象")}${this.tool("spiral", "增强")}
            <span class="sep"></span>
            ${this.tool("whereused", "使用位置")}${this.tool("wand", "检查")}${this.tool("clamp", "测试")}${this.tool("hierarchy", "对象列表")}
            <button class="word fmt off">格式化器</button>
            <button class="word doc">函数模块文档</button>
            <span class="sep"></span>
            <button class="word elem off">文本元素</button>
          </div>
          <div class="content">
            ${this.line("module", "函数模块", "w-id", "ZFM_ADD")}
            <div class="tabs" role="tablist">
              <button class="tab sel" role="tab" aria-selected="true"><svg width="88" height="30" viewBox="0 0 88 30"><path d="M0 30Q2 30 4 27L28 2q2-1.500 4-1.500H85q2.500 0 2.500 2.500V31z" fill="#8fb3da" stroke="#6c97c4"/></svg><span>属性</span></button>
              <button class="tab" role="tab"><svg width="75" height="30" viewBox="0 0 75 30">${tabShape}</svg><span>导入</span></button>
              <button class="tab" role="tab"><svg width="75" height="30" viewBox="0 0 75 30">${tabShape}</svg><span>导出</span></button>
              <button class="tab wide" role="tab"><svg width="110" height="30" viewBox="0 0 110 30"><path d="M.5 31V13L13 .5H107q2.500 0 2.500 2.500V31z" fill="#c3d7ea" stroke="#7da0c4"/></svg><span>正在更改</span></button>
            </div>
            <div class="sheet">
              <section class="group">
                <h2>分类</h2>
                <div class="classify">
                  <div class="row"><label class="lab" for="fgroup">函数组</label>${this.field("fgroup", "w-grp", "ZFG_TEST001")}${this.field("fgtext", "w-desc", "")}</div>
                  <div class="row"><label class="lab" for="short">短文本</label>
                    <div class="short"><input id="short" class="field w-short" .value=${"两数相加"} /><i class="c tl"></i><i class="c bl"></i><i class="c tr"></i><i class="c br"></i></div>
                  </div>
                </div>
              </section>
              <div class="pair">
                <section class="half">
                  <h2>处理类型</h2>
                  <div class="type">
                    <div class="choices">
                      ${this.radio("kind", "常规函数模块")}${this.radio("kind", "远程启用的模块", true)}${this.radio("kind", "更新模块")}
                      ${this.radio("run", "立即开始", true, true)}${this.radio("run", "立即启动（不可更新）", false, true)}${this.radio("run", "启动已延迟", false, true)}${this.radio("run", "集中运行", false, true)}
                    </div>
                    <div class="check"><label class="opt"><input type="checkbox" />支持 BasXML</label></div>
                  </div>
                </section>
                <section class="half">
                  <h2></h2>
                  <div class="general">
                    <div class="row"><span class="lab"></span>${this.field("owner", "w-user", "S4DFACTORY")}</div>
                    <div class="row"><span class="lab"></span>${this.field("changed", "w-user", "")}</div>
                    ${this.line("date", "更改日期", "w-date", "2022/08/10")}
                    ${this.line("package", "包", "w-full", "$TMP")}
                    ${this.line("program", "程序名称", "w-full", "SAPLZFG_TEST001")}
                    ${this.line("include", "Include 程序名称", "w-full", "LZFG_TEST001U05")}
                    ${this.line("language", "原始语言", "w-lang", "ZH")}
                    <div class="row"><span class="lab free">未发布</span></div>
                    <label class="opt"><input type="checkbox" />编辑锁</label>
                    <label class="opt off"><input type="checkbox" disabled />全局</label>
                  </div>
                </section>
              </div>
            </div>
          </div>
        </main>
        <div class="status">
          <span></span>
          ${icon("sap")}
          <div class="sys">${icon("play")}<span class="bar"></span><span>S4D (1) 110</span><span class="tri"></span><span class="bar"></span><span>s</span></div>
          <div class="ime"><span class="logo">${icon("sogou")}</span><b>英</b>${["punct", "mic", "keyboard", "shirt", "grid"].map((n) => icon(n))}</div>
        </div>
        <task-bar></task-bar>
        <span class="mark">CSDN @lmszsd</span>
      </div>
    `;
  }
}
